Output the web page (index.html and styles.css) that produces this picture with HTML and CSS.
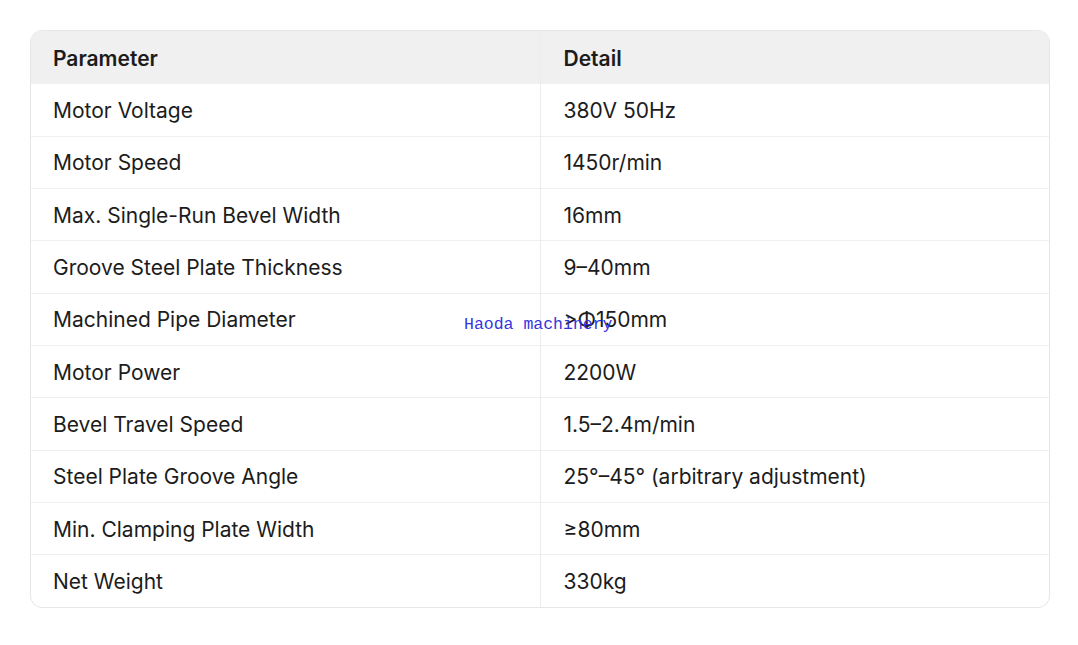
FILE: index.html
```html
<!DOCTYPE html>
<html lang="en">
<head>
<meta charset="utf-8">
<title>Specs</title>
<link rel="stylesheet" href="styles.css">
</head>
<body>
<div class="card">
  <table class="spec">
    <thead>
      <tr><th>Parameter</th><th>Detail</th></tr>
    </thead>
    <tbody>
      <tr><td>Motor Voltage</td><td>380V 50Hz</td></tr>
      <tr><td>Motor Speed</td><td>1450r/min</td></tr>
      <tr><td>Max. Single-Run Bevel Width</td><td>16mm</td></tr>
      <tr><td>Groove Steel Plate Thickness</td><td>9–40mm</td></tr>
      <tr><td>Machined Pipe Diameter</td><td>&gt;Φ150mm</td></tr>
      <tr><td>Motor Power</td><td>2200W</td></tr>
      <tr><td>Bevel Travel Speed</td><td>1.5–2.4m/min</td></tr>
      <tr><td>Steel Plate Groove Angle</td><td>25°–45° (arbitrary adjustment)</td></tr>
      <tr><td>Min. Clamping Plate Width</td><td>≥80mm</td></tr>
      <tr><td>Net Weight</td><td>330kg</td></tr>
    </tbody>
  </table>
  <div class="watermark">Haoda machinery</div>
</div>
</body>
</html>
```
FILE: styles.css
```css
html, body {
  margin: 0;
  padding: 0;
  background: #ffffff;
}
body {
  padding: 30px 28px 30px 30px;
  font-family: Inter, "Liberation Sans", Arial, sans-serif;
  color: #1c1c1c;
}
.card {
  position: relative;
  width: 1020px;
  border: 1px solid #e6e6e6;
  border-radius: 12px;
  overflow: hidden;
  box-sizing: border-box;
}
.spec {
  width: 100%;
  border-collapse: collapse;
  font-size: 21px;
}
.spec th, .spec td {
  text-align: left;
  padding: 1px 23px 0 22px;
  height: 52.3px;
  box-sizing: border-box;
  vertical-align: middle;
}
.spec th:first-child, .spec td:first-child {
  width: 509px;
  border-right: 1px solid #ececec;
}
.spec th:last-child, .spec td:last-child {
  padding-left: 23px;
}
.spec thead tr {
  background: #f0f0f0;
}
.spec th {
  font-weight: 600;
  height: 53px;
}
.spec tbody tr {
  border-top: 1px solid #efefef;
}
.spec tbody tr:first-child {
  border-top: none;
}
.watermark {
  position: absolute;
  left: 433px;
  top: 284px;
  font-family: "Liberation Mono", "DejaVu Sans Mono", monospace;
  font-size: 16.5px;
  color: #3434dc;
  pointer-events: none;
}
```
